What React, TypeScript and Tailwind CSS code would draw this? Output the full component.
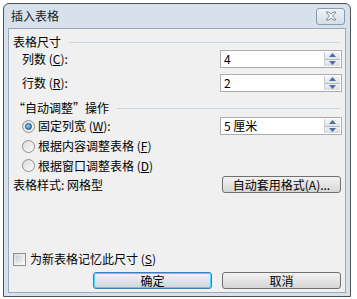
const font = { fontFamily: '"SimSun", "Noto Sans CJK SC", "Liberation Sans", sans-serif' };

function Spin() {
  return (
    <div className="flex h-full w-[16px] flex-col border-l border-[#c9cfd6]">
      <div className="flex flex-1 items-center justify-center border-b border-[#b5bcc5] bg-gradient-to-b from-[#f6f7f9] to-[#dfe3e8]">
        <svg width="7" height="4" viewBox="0 0 7 4">
          <path d="M0 4 L3.5 0 L7 4 Z" fill="#4a6fa5" />
        </svg>
      </div>
      <div className="flex flex-1 items-center justify-center bg-gradient-to-b from-[#eef0f3] to-[#d9dde3]">
        <svg width="7" height="4" viewBox="0 0 7 4">
          <path d="M0 0 L3.5 4 L7 0 Z" fill="#4a6fa5" />
        </svg>
      </div>
    </div>
  );
}

function SpinInput({ value }: { value: string }) {
  return (
    <div className="flex h-[18px] w-[122px] items-stretch border border-[#abadb3] bg-white p-[1px]">
      <div className="flex flex-1 items-center pl-[2px] text-[12px] leading-none text-black">{value}</div>
      <Spin />
    </div>
  );
}

function Radio({ checked }: { checked?: boolean }) {
  return (
    <div className="flex h-[13px] w-[13px] items-center justify-center rounded-full border border-[#8e8f8f] bg-gradient-to-br from-[#dcdcdc] to-[#fbfbfb]">
      {checked && (
        <div className="h-[7px] w-[7px] rounded-full border border-[#1c5180] bg-[radial-gradient(circle_at_35%_35%,#8fd0f5,#1a6fb7)]" />
      )}
    </div>
  );
}

function Section({ title }: { title: string }) {
  return (
    <div className="flex h-[16px] items-center pl-[4px] pr-[2px]">
      <span className="text-[12px] leading-none text-black">{title}</span>
      <div className="ml-[8px] h-px flex-1 bg-[#c8d5e3]" />
    </div>
  );
}

function Btn({ label, focused }: { label: string; focused?: boolean }) {
  return (
    <div
      className={
        "flex h-[17px] w-[119px] items-center justify-center rounded-[3px] border text-[12px] leading-none text-black " +
        (focused
          ? "border-[#3c7fb1] bg-gradient-to-b from-[#eaf6fd] to-[#d4d4d4] shadow-[inset_0_0_0_1px_#48d2ff]"
          : "border-[#707070] bg-gradient-to-b from-[#f2f2f2] to-[#d6d6d6]")
      }
    >
      {label}
    </div>
  );
}

export default function App() {
  return (
    <div className="h-[299px] w-[357px] overflow-hidden bg-white pl-[3px] pt-[3px]" style={font}>
      <div className="flex h-[294px] w-[348px] flex-col rounded-t-[6px] border border-[#505050] bg-[#d6e1ec] px-[4px] pb-[3px]">
        <div className="flex h-[24px] items-center justify-between pl-[3px] pr-[1px]">
          <span className="text-[12px] leading-none text-[#202020]">插入表格</span>
          <div className="flex h-[17px] w-[29px] items-center justify-center rounded-[3px] border border-[#8a9ab0] bg-gradient-to-b from-[#f0f4f8] to-[#d5dde7]">
            <svg width="12" height="10" viewBox="0 0 12 10">
              <path
                d="M1 1 H4 L6 3.2 L8 1 H11 L7.6 5 L11 9 H8 L6 6.8 L4 9 H1 L4.4 5 Z"
                fill="#fafcfe"
                stroke="#6f7c8c"
                strokeWidth="0.9"
                strokeLinejoin="round"
              />
            </svg>
          </div>
        </div>
        <div className="flex flex-1 flex-col border border-[#99aabd] bg-[#f0f0f0] pt-[5px] pb-[3px] pr-[3px]">
          <Section title="表格尺寸" />
          <div className="flex h-[18px] items-center justify-between pl-[13px]">
            <span className="text-[12px] leading-none">列数 (<u>C</u>):</span>
            <SpinInput value="4" />
          </div>
          <div className="mt-[6px] flex h-[18px] items-center justify-between pl-[13px]">
            <span className="text-[12px] leading-none">行数 (<u>R</u>):</span>
            <SpinInput value="2" />
          </div>
          <div className="mt-[8px]">
            <Section title="“自动调整”操作" />
          </div>
          <div className="flex h-[20px] items-center justify-between pl-[13px]">
            <div className="flex items-center gap-[3px]">
              <Radio checked />
              <span className="text-[12px] leading-none">固定列宽 (<u>W</u>):</span>
            </div>
            <SpinInput value="5 厘米" />
          </div>
          <div className="flex h-[20px] items-center gap-[3px] pl-[13px]">
            <Radio />
            <span className="text-[12px] leading-none">根据内容调整表格 (<u>F</u>)</span>
          </div>
          <div className="flex h-[19px] items-center gap-[3px] pl-[13px]">
            <Radio />
            <span className="text-[12px] leading-none">根据窗口调整表格 (<u>D</u>)</span>
          </div>
          <div className="flex h-[19px] items-center justify-between pl-[4px] pr-[1px]">
            <span className="text-[12px] leading-none">表格样式: 网格型</span>
            <Btn label="自动套用格式(A)..." />
          </div>
          <div className="flex-1" />
          <div className="flex h-[16px] items-center gap-[4px] pl-[4px]">
            <div className="h-[13px] w-[13px] border border-[#8e8f8f] bg-gradient-to-br from-[#dcdcdc] to-[#fbfbfb] p-[2px]">
              <div className="h-full w-full bg-gradient-to-br from-[#cbcfd5] to-[#f4f4f4]" />
            </div>
            <span className="text-[12px] leading-none">为新表格记忆此尺寸 (<u>S</u>)</span>
          </div>
          <div className="mt-[5px] flex justify-end gap-[10px] pr-[1px]">
            <Btn label="确定" focused />
            <Btn label="取消" />
          </div>
        </div>
      </div>
    </div>
  );
}
